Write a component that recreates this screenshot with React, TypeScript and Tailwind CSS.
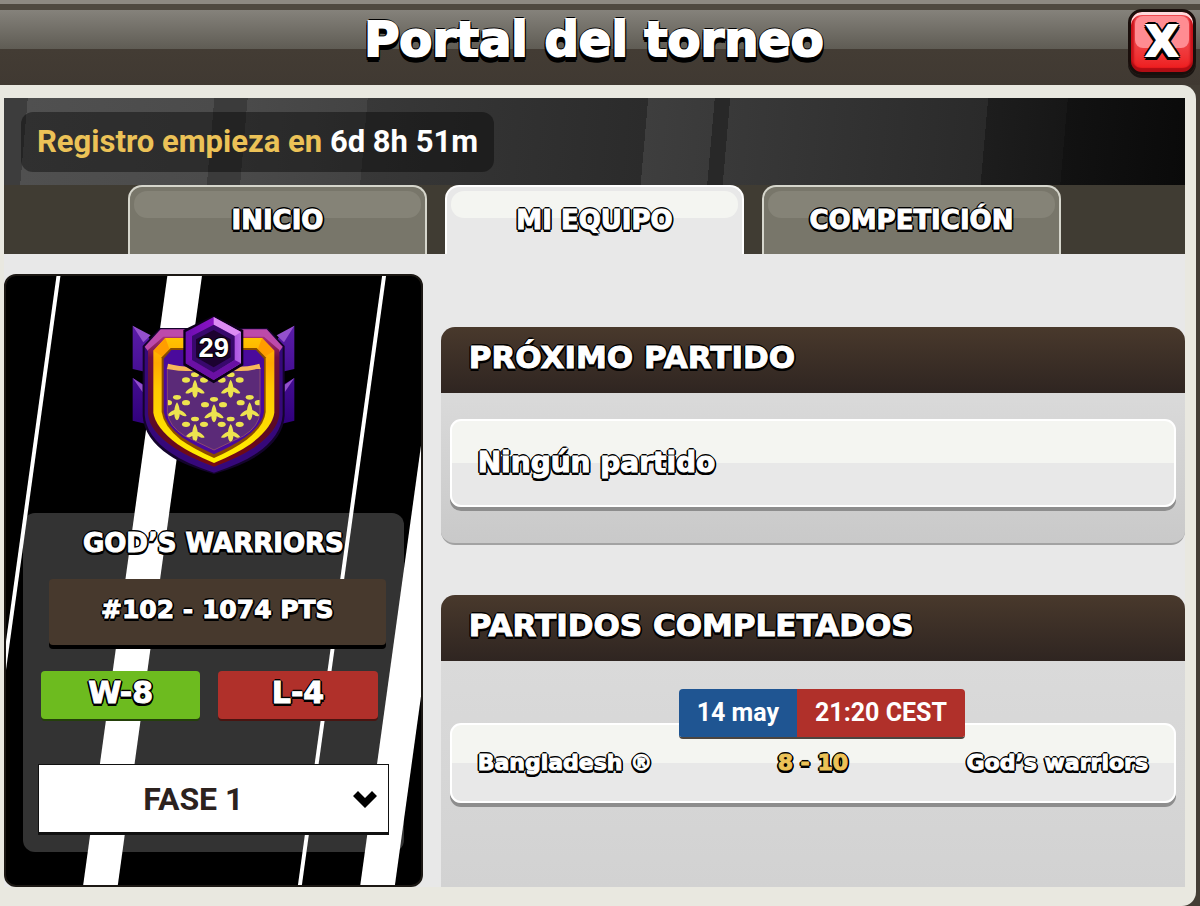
import React, { ReactNode, useState } from 'react';

interface Match {
  date: string;
  time: string;
  home: string;
  score: string;
  away: string;
}

const TABS = ['INICIO', 'MI EQUIPO', 'COMPETICIÓN'];

const MATCHES: Match[] = [
  { date: '14 may', time: '21:20 CEST', home: 'Bangladesh ®', score: '8 - 10', away: 'God’s warriors' },
];

// Thickened lettering with a black outline and a hard drop below
const OUTLINE =
  'font-["DejaVu_Sans","Liberation_Sans",sans-serif] font-black [-webkit-text-stroke:1px_currentColor] [text-shadow:-2px_0_0_#000,2px_0_0_#000,0_-2px_0_#000,-1px_-1px_0_#000,1px_-1px_0_#000,-2px_1px_0_#000,2px_1px_0_#000,-1px_3px_0_#000,1px_3px_0_#000]';

function CloseButton() {
  return (
    <button
      type="button"
      aria-label="Cerrar"
      className="relative flex h-[66px] w-[68px] items-center justify-center rounded-[14px] border-[3px] border-[#1a0f0c] bg-gradient-to-b from-[#f04a50] from-40% to-[#ee1014] shadow-[0_3px_0_#1a1512,inset_0_3px_0_#ffd9dc,inset_0_-4px_1px_#b00d14,inset_3px_0_2px_#c9141b,inset_-3px_0_2px_#c9141b]"
    >
      <span className="absolute inset-x-1 top-1 h-[32px] rounded-[8px] bg-[#ff8c92]" />
      <span className="relative font-['DejaVu_Sans','Liberation_Sans',sans-serif] text-[42px] leading-none font-black text-white [-webkit-text-stroke:2px_currentColor] [text-shadow:-3px_0_0_#000,3px_0_0_#000,0_-3px_0_#000,-2px_-2px_0_#000,2px_-2px_0_#000,-3px_2px_0_#000,3px_2px_0_#000,-2px_4px_0_#000,2px_4px_0_#000]">
        X
      </span>
    </button>
  );
}

/* Ermine tail with its three dots, centred on 0,0 */
function Ermine({ x, y }: { x: number; y: number }) {
  return (
    <g transform={`translate(${x} ${y})`} fill="#ede34f">
      <ellipse cx="0" cy="-42" rx="12" ry="7" />
      <ellipse cx="-27" cy="-26" rx="12" ry="8" />
      <ellipse cx="27" cy="-26" rx="12" ry="8" />
      <path d="M0,-27 C5,-20 7,-12 8,-4 C18,0 26,6 29,13 C23,17 14,12 8,9 C8,18 5,25 0,27 C-5,25 -8,18 -8,9 C-14,12 -23,17 -29,13 C-26,6 -18,0 -8,-4 C-7,-12 -5,-20 0,-27Z" />
    </g>
  );
}

function ClanCrest() {
  return (
    <svg className="h-[158px] w-[163px]" viewBox="66 46 489 474" role="img" aria-label="Escudo nivel 29">
      <defs>
        <linearGradient id="crestRim" x1="0" y1="0" x2="0" y2="1">
          <stop offset="0" stopColor="#a83078" />
          <stop offset="0.16" stopColor="#701040" />
          <stop offset="0.7" stopColor="#5c0a24" />
          <stop offset="1" stopColor="#7a0a10" />
        </linearGradient>
        <linearGradient id="crestGold" x1="0" y1="0" x2="0" y2="1">
          <stop offset="0" stopColor="#ffc400" />
          <stop offset="0.2" stopColor="#ffa800" />
          <stop offset="0.4" stopColor="#ffc800" />
          <stop offset="1" stopColor="#fff000" />
        </linearGradient>
        <linearGradient id="crestWing" x1="0" y1="0" x2="0" y2="1">
          <stop offset="0" stopColor="#5a1ca8" />
          <stop offset="1" stopColor="#30007c" />
        </linearGradient>
        <linearGradient id="crestHex" x1="0" y1="0" x2="1" y2="0">
          <stop offset="0" stopColor="#6c0eb0" />
          <stop offset="0.5" stopColor="#8a12c4" />
          <stop offset="1" stopColor="#b868e8" />
        </linearGradient>
        <clipPath id="crestField">
          <path d="M172,202 H450 V335 Q448,376 400,406 L312,448 L224,406 Q176,376 172,335Z" />
        </clipPath>
      </defs>

      {/* Wings */}
      <g fill="url(#crestWing)">
        <path d="M68,75 L118,112 V216 L68,205Z M68,232 L118,262 V372 L68,360Z" />
        <path d="M553,75 L504,112 V216 L553,205Z M553,232 L504,262 V372 L553,360Z" />
      </g>
      <path
        d="M68,75 L122,104 L100,125Z M68,232 L98,252 V275Z M553,75 L500,104 L522,125Z M553,232 L524,252 V275Z"
        fill="#9450cc"
      />

      {/* Shield */}
      <path d="M150,82 H472 L524,136 V345 Q520,412 444,464 Q400,494 312,520 Q220,494 178,464 Q102,412 98,345 V136Z" fill="#14042c" />
      <path d="M152,86 H470 L518,138 V342 Q514,406 440,458 Q396,488 312,516 Q226,488 184,458 Q108,406 104,342 V138Z" fill="#36087a" />
      <path d="M152,86 H470 L518,138 L505,158 H119 L104,138Z" fill="#bd4aaa" />
      <path d="M160,108 H462 L508,148 V340 Q504,392 430,442 Q386,471 312,498 Q238,471 194,442 Q118,392 114,340 V148Z" fill="url(#crestRim)" />
      <path d="M166,112 H456 L493,150 V336 Q487,380 422,430 Q382,458 312,487 Q242,458 202,430 Q136,380 130,336 V150Z" fill="url(#crestGold)" />
      <path d="M166,112 L130,150 L158,168 L178,144Z M456,112 L493,150 L464,168 L444,144Z" fill="#ff9d00" />
      <path d="M182,142 H440 L467,170 V334 Q463,376 410,417 Q372,445 312,472 Q252,445 212,417 Q161,376 155,334 V170Z" fill="#8a4a00" />
      <path d="M184,148 H438 L462,174 V334 Q458,372 406,410 Q368,436 312,461 Q256,436 216,410 Q166,372 161,334 V174Z" fill="#4a0a9c" />

      {/* Ermine field */}
      <path d="M172,202 H450 V335 Q448,376 400,406 L312,448 L224,406 Q176,376 172,335Z" fill="#5b2a78" />
      <g clipPath="url(#crestField)">
        <Ermine x={255} y={264} />
        <Ermine x={362} y={264} />
        <Ermine x={201} y={332} />
        <Ermine x={312} y={338} />
        <Ermine x={419} y={332} />
        <Ermine x={255} y={397} />
        <Ermine x={362} y={397} />
      </g>
      <path d="M172,202 H450 V335 Q448,376 400,406 L312,448 L224,406 Q176,376 172,335Z" fill="none" stroke="#8a4a70" strokeWidth="3" />
      <path d="M174,189 Q210,198 240,198 H386 Q420,198 448,189 L452,205 H440 Q410,212 386,211 H238 Q208,212 186,207 L171,205Z" fill="#f7b85a" />

      {/* Level badge */}
      <path d="M311,44 L400,88 V194 L311,248 L220,194 V88Z" fill="#0c0018" />
      <path d="M311,49 L393,94 V188 L311,238 L227,188 V94Z" fill="url(#crestHex)" />
      <path d="M311,49 L393,94 L374,106 L311,72Z" fill="#dc8cf4" />
      <path d="M227,188 L246,178 L311,216 V238Z M393,188 L374,178 L311,216 V238Z" fill="#6a10a4" />
      <path d="M311,72 L374,106 V178 L311,216 L246,178 V106Z" fill="#38086c" />
      <path d="M311,88 L362,116 V170 L311,200 L258,170 V116Z" fill="#1c0230" />
      <text x="311" y="170" textAnchor="middle" fontFamily="Liberation Sans, sans-serif" fontSize="82" fontWeight="700" fill="#fff" stroke="#000" strokeWidth="6" paintOrder="stroke">
        29
      </text>
    </svg>
  );
}

function Stripes() {
  return (
    <svg className="absolute inset-0 h-full w-full" viewBox="0 0 419 613" preserveAspectRatio="none" aria-hidden="true">
      <g fill="#fff">
        <polygon points="51,0 55,0 -30,613 -34,613" />
        <polygon points="163,0 198,0 113,613 78,613" />
        <polygon points="380,0 384,0 299,613 295,613" />
        <polygon points="443,0 478,0 393,613 358,613" />
      </g>
    </svg>
  );
}

function TeamCard() {
  return (
    <aside className="relative overflow-hidden rounded-xl border-2 border-[#1c1814] bg-black px-[17px] pt-10 pb-[33px] text-white">
      <Stripes />
      <div className="relative flex justify-center">
        <ClanCrest />
      </div>
      <div className="relative mt-[39px] rounded-xl bg-white/20 px-[15px] pt-[14px] pb-[17px]">
        <h2 className={`text-center text-[26px] leading-8 ${OUTLINE}`}>GOD’S WARRIORS</h2>
        <p className={`mt-5 mr-[3px] ml-[11px] rounded bg-[#47392d] pt-[14px] pb-[18px] text-center text-[25px] leading-[34px] shadow-[0_4px_0_#000] ${OUTLINE}`}>
          #102 - 1074 PTS
        </p>
        <div className="mt-[26px] mr-[11px] ml-[3px] grid grid-cols-2 gap-[18px]">
          <div className={`rounded bg-[#6dbb1f] pb-1 text-center text-[30px] leading-[44px] shadow-[0_2px_0_#24400a] ${OUTLINE}`}>W-8</div>
          <div className={`rounded bg-[#b0302a] pb-1 text-center text-[30px] leading-[44px] shadow-[0_2px_0_#4a1410] ${OUTLINE}`}>L-4</div>
        </div>
        <div className="mt-[45px] grid">
          <select
            aria-label="Fase"
            className="col-start-1 row-start-1 h-[71px] appearance-none border border-b-[3px] border-[#111] bg-white pr-10 font-['Roboto','Liberation_Sans',sans-serif] text-[32px] font-bold text-[#2c221e] [text-align-last:center]"
          >
            <option>FASE 1</option>
          </select>
          <svg
            className="pointer-events-none relative col-start-1 row-start-1 mr-3 h-[17px] w-6 self-center justify-self-end"
            viewBox="0 0 24 17"
            aria-hidden="true"
          >
            <path d="M5,0 L12,7 L19,0 L24,5 L12,17 L0,5Z" fill="#000" />
          </svg>
        </div>
      </div>
    </aside>
  );
}

function Section({ title, last = false, children }: { title: string; last?: boolean; children: ReactNode }) {
  return (
    <section className={last ? 'flex flex-1 flex-col' : ''}>
      <h2 className={`rounded-t-[14px] bg-gradient-to-b from-[#49392c] to-[#2f2521] px-7 pt-[10px] pb-4 text-[31px] leading-10 ${OUTLINE}`}>
        {title}
      </h2>
      <div
        className={
          last
            ? 'flex-1 bg-gradient-to-b from-[#dadada] to-[#d2d2d2] px-[9px] pt-7'
            : 'rounded-b-[14px] border-b-2 border-[#a2a2a2] bg-gradient-to-b from-[#dadada] to-[#c9c9c9] px-[9px] pt-[26px] pb-9'
        }
      >
        {children}
      </div>
    </section>
  );
}

const PLATE =
  'rounded-[11px] border-2 border-white bg-[linear-gradient(#f4f5f1_50%,#e8e8e8_50%)] px-[26px] shadow-[0_4px_0_#8d8d8d]';

function CompletedMatch({ match }: { match: Match }) {
  return (
    <article className="flex flex-col">
      <div className="relative z-10 -mb-4 ml-[18px] flex self-center overflow-hidden rounded border-b-2 border-[#4c4540] font-['Roboto','Liberation_Sans',sans-serif] text-[25px] leading-[48px] font-bold">
        <time className="bg-[#1f5592] px-[18px]">{match.date}</time>
        <span className="bg-[#b0302a] px-[18px]">{match.time}</span>
      </div>
      <div className={`grid grid-cols-[1fr_auto_1fr] items-center py-5 text-[22px] leading-9 ${PLATE} ${OUTLINE}`}>
        <span>{match.home}</span>
        <span className="text-[#ecc257]">{match.score}</span>
        <span className="text-right">{match.away}</span>
      </div>
    </article>
  );
}

export default function App() {
  const [tab, setTab] = useState(1);

  return (
    <div className="min-h-screen bg-[#433d35] pr-1 text-white">
      <header className="-mr-1 grid h-[85px] grid-cols-[60px_1fr_68px] bg-[linear-gradient(#8d8a82_0_4px,#4f4a40_4px_10px,#85827b_10px,#5f5c54_49px,#433c34_49px,#403932_85px)] pt-[9px] pr-1">
        <h1 className="col-start-2 text-center font-['DejaVu_Sans','Liberation_Sans',sans-serif] text-[48px] leading-[60px] font-black [-webkit-text-stroke:2px_currentColor] [text-shadow:-2px_0_0_#000,2px_0_0_#000,0_-2px_0_#000,-2px_2px_0_#000,2px_2px_0_#000,-2px_4px_0_#000,2px_4px_0_#000,-1px_6px_0_#000,1px_6px_0_#000]">
          Portal del torneo
        </h1>
        <CloseButton />
      </header>

      <main className="rounded-r-[14px] bg-[#e9e8e0] pt-[13px] pr-[11px] pb-[19px] pl-1">
        <div className="bg-[linear-gradient(95deg,#3d3d3d_2%,#505050_2%,#4b4b4b_17.7%,#3b3b3b_17.7%,#3b3b3b_20.5%,#4a4a4a_20.5%,#434343_30.6%,#383838_30.6%,#2b2b2b_54.2%,#3e3e3e_54.2%,#3a3a3a_59.8%,#282828_59.8%,#282828_61.1%,#393939_61.1%,#2a2a2a_82.8%,#1d1d1d_82.8%,#171717_89.5%,#121212_89.5%,#0a0a0a)] px-[17px] pt-[14px] pb-[13px]">
          <p className="inline-block rounded-xl bg-black/40 px-4 font-['Roboto','Liberation_Sans',sans-serif] text-[31px] leading-[60px] font-bold">
            <span className="text-[#ecc257]">Registro empieza en</span> 6d 8h 51m
          </p>
        </div>

        <div className="bg-[#403c33]">
          <div role="tablist" className="mx-auto grid w-[79%] grid-cols-3 gap-[18px]">
            {TABS.map((label, i) => (
              <button
                key={label}
                type="button"
                role="tab"
                aria-selected={i === tab}
                onClick={() => setTab(i)}
                className={`relative rounded-t-[14px] border-2 border-b-0 pb-[1px] text-[26px] leading-[66px] ${OUTLINE} ${
                  i === tab ? 'border-white bg-[#e8e8e8]' : 'border-[#d6d6cc] bg-[#78766a]'
                }`}
              >
                <span
                  className={`absolute inset-x-1 top-1 h-[27px] rounded-[13px] ${i === tab ? 'bg-[#f4f5f1]' : 'bg-[#858377]'}`}
                />
                <span className="relative">{label}</span>
              </button>
            ))}
          </div>
        </div>

        <div className="grid grid-cols-[36fr_64fr] gap-[18px] bg-[#e8e8e8] pt-5">
          <TeamCard />
          <div className="flex flex-col gap-[50px] pt-[53px]">
            <Section title="PRÓXIMO PARTIDO">
              <p className={`py-[22px] text-[28px] leading-10 ${PLATE} ${OUTLINE}`}>Ningún partido</p>
            </Section>
            <Section title="PARTIDOS COMPLETADOS" last>
              {MATCHES.map((match) => (
                <CompletedMatch key={match.date + match.time} match={match} />
              ))}
            </Section>
          </div>
        </div>
      </main>
    </div>
  );
}
